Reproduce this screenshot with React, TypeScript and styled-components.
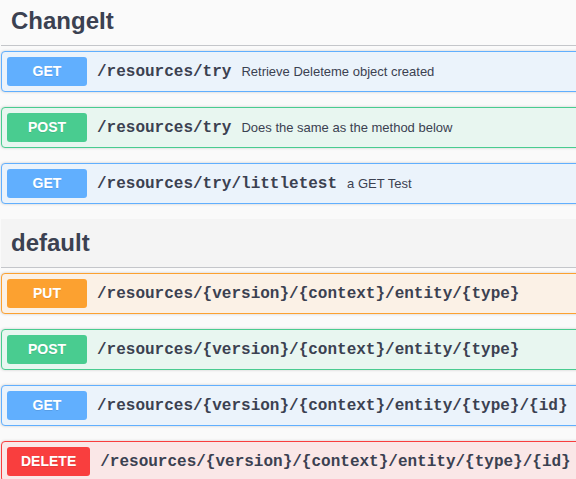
import React from "react";
import styled, { createGlobalStyle } from "styled-components";

const GlobalStyle = createGlobalStyle`
  html, body {
    margin: 0;
    padding: 0;
    background: #fafafa;
    overflow: hidden;
  }
  body {
    font-family: "Liberation Sans", Arial, sans-serif;
    color: #3b4151;
  }
`;

const methodColors: Record<string, string> = {
  GET: "#61affe",
  POST: "#49cc90",
  PUT: "#fca130",
  DELETE: "#f93e3e",
};

const methodTints: Record<string, string> = {
  GET: "#ebf3fb",
  POST: "#e8f6f0",
  PUT: "#fbf1e6",
  DELETE: "#fae7e7",
};

const Page = styled.div`
  width: 590px;
  margin-top: -3px;
  padding-left: 1px;
`;

const TagSection = styled.section`
  display: flex;
  flex-direction: column;
`;

const TagHeading = styled.h4<{ $hover?: boolean }>`
  display: flex;
  align-items: center;
  height: 48px;
  margin: 0 0 5px;
  padding: 0 20px 0 10px;
  border-bottom: 1px solid #c4c6ca;
  background: ${(p) => (p.$hover ? "#f4f4f4" : "transparent")};
  font-size: 24px;
  font-weight: 700;
  color: #3b4151;
`;

const OpBlock = styled.div<{ $method: string }>`
  display: flex;
  align-items: center;
  margin: 0 0 15px;
  padding: 5px;
  border: 1px solid ${(p) => methodColors[p.$method]};
  border-radius: 4px;
  background: ${(p) => methodTints[p.$method]};
  box-shadow: 0 0 3px rgba(0, 0, 0, 0.19);
`;

const Method = styled.span<{ $method: string }>`
  min-width: 80px;
  box-sizing: border-box;
  padding: 6px 14px;
  line-height: 17px;
  border-radius: 3px;
  background: ${(p) => methodColors[p.$method]};
  color: #fff;
  font-size: 14px;
  font-weight: 700;
  text-align: center;
  text-shadow: 0 1px 0 rgba(0, 0, 0, 0.1);
`;

const Path = styled.span`
  padding: 0 10px;
  font-family: "Liberation Mono", "Courier New", monospace;
  font-size: 16px;
  font-weight: 700;
  color: #3b4151;
  white-space: nowrap;
`;

const Description = styled.span`
  font-size: 13px;
  color: #3b4151;
  white-space: nowrap;
`;

type Op = { method: string; path: string; desc?: string };

const sections: { name: string; hover?: boolean; ops: Op[] }[] = [
  {
    name: "ChangeIt",
    ops: [
      { method: "GET", path: "/resources/try", desc: "Retrieve Deleteme object created" },
      { method: "POST", path: "/resources/try", desc: "Does the same as the method below" },
      { method: "GET", path: "/resources/try/littletest", desc: "a GET Test" },
    ],
  },
  {
    name: "default",
    hover: true,
    ops: [
      { method: "PUT", path: "/resources/{version}/{context}/entity/{type}" },
      { method: "POST", path: "/resources/{version}/{context}/entity/{type}" },
      { method: "GET", path: "/resources/{version}/{context}/entity/{type}/{id}" },
      { method: "DELETE", path: "/resources/{version}/{context}/entity/{type}/{id}" },
    ],
  },
];

export default function App() {
  return (
    <>
      <GlobalStyle />
      <Page>
        {sections.map((s) => (
          <TagSection key={s.name}>
            <TagHeading $hover={s.hover}>{s.name}</TagHeading>
            {s.ops.map((op, i) => (
              <OpBlock key={i} $method={op.method}>
                <Method $method={op.method}>{op.method}</Method>
                <Path>{op.path}</Path>
                {op.desc && <Description>{op.desc}</Description>}
              </OpBlock>
            ))}
          </TagSection>
        ))}
      </Page>
    </>
  );
}
